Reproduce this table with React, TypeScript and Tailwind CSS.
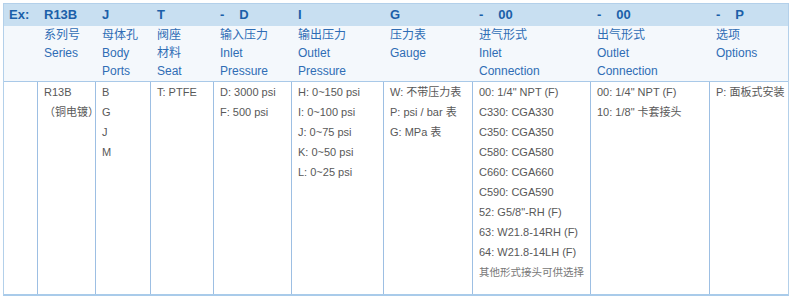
import React from "react";

const font = { fontFamily: '"Liberation Sans", Arial, "Noto Sans CJK SC", sans-serif' };

type Col = { head: React.ReactNode; labels: string[]; data: string[] };

const Dash = ({ v }: { v: string }) => (
  <span className="flex">
    <span>-</span>
    <span className="ml-[15px]">{v}</span>
  </span>
);

const cols: Col[] = [
  { head: "Ex:", labels: [], data: [] },
  { head: "R13B", labels: ["系列号", "Series"], data: ["R13B", "（铜电镀）"] },
  { head: "J", labels: ["母体孔", "Body", "Ports"], data: ["B", "G", "J", "M"] },
  { head: "T", labels: ["阀座", "材料", "Seat"], data: ["T: PTFE"] },
  { head: <Dash v="D" />, labels: ["输入压力", "Inlet", "Pressure"], data: ["D: 3000 psi", "F: 500 psi"] },
  {
    head: "I",
    labels: ["输出压力", "Outlet", "Pressure"],
    data: ["H: 0~150 psi", "I: 0~100 psi", "J: 0~75 psi", "K: 0~50 psi", "L: 0~25 psi"],
  },
  { head: "G", labels: ["压力表", "Gauge"], data: ["W: 不带压力表", "P: psi / bar 表", "G: MPa 表"] },
  {
    head: <Dash v="00" />,
    labels: ["进气形式", "Inlet", "Connection"],
    data: [
      "00: 1/4\" NPT (F)",
      "C330: CGA330",
      "C350: CGA350",
      "C580: CGA580",
      "C660: CGA660",
      "C590: CGA590",
      "52: G5/8\"-RH (F)",
      "63: W21.8-14RH (F)",
      "64: W21.8-14LH (F)",
      "其他形式接头可供选择",
    ],
  },
  { head: <Dash v="00" />, labels: ["出气形式", "Outlet", "Connection"], data: ["00: 1/4\" NPT (F)", "10: 1/8\" 卡套接头"] },
  { head: <Dash v="P" />, labels: ["选项", "Options"], data: ["P: 面板式安装"] },
];

export default function App() {
  return (
    <div className="w-[790px] h-[297px] bg-white pt-[3px] pl-[3px]" style={font}>
      <div className="w-[786px] border-t border-l border-r border-[#b3d0ea] border-b-2 border-b-[#a9cbea] grid grid-cols-[33px_58px_55px_63px_78px_92px_89px_118px_119px_1fr]">
        {cols.map((c, i) => (
          <div
            key={"h" + i}
            className={`h-[22px] bg-[#c8dff1] text-[13px] font-bold text-[#1b5fa9] flex items-center ${i === 0 ? "pl-[5px]" : "pl-[7px]"}`}
          >
            {c.head}
          </div>
        ))}
        {cols.map((c, i) => (
          <div
            key={"l" + i}
            className={`h-[56px] bg-[#f4f8fc] border-b border-[#a9c9e8] text-[12px] leading-[18px] text-[#2f6db5] ${i === 0 ? "pl-[5px]" : "pl-[7px]"}`}
          >
            {c.labels.map((t) => (
              <div key={t}>{t}</div>
            ))}
          </div>
        ))}
        {cols.map((c, i) => (
          <div
            key={"d" + i}
            className={`h-[212px] text-[11px] leading-[20px] text-[#585858] ${i === 0 ? "pl-[5px]" : "pl-[6px] border-l border-[#9dbfe3]"}`}
          >
            {c.data.map((t) => (
              <div key={t} className={`whitespace-nowrap ${t.startsWith("其他") ? "text-[10.5px] text-[#777]" : ""}`}>
                {t}
              </div>
            ))}
          </div>
        ))}
      </div>
    </div>
  );
}
